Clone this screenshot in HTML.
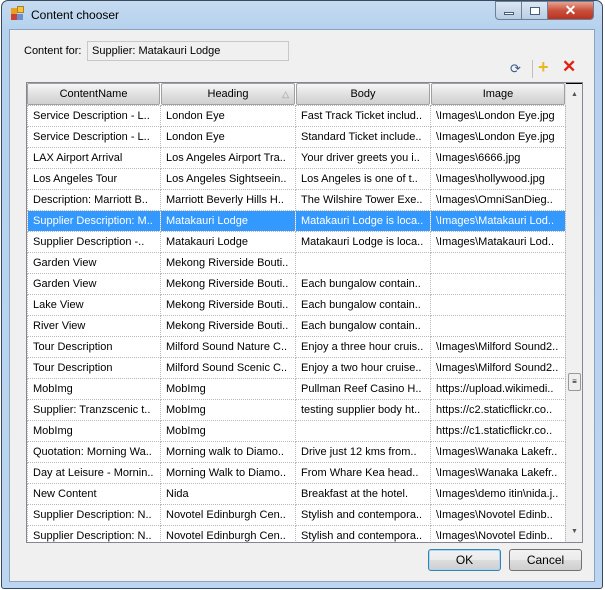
<!DOCTYPE html>
<html><head><style>
*{margin:0;padding:0;box-sizing:border-box}
body{width:605px;height:590px;overflow:hidden;background:#fff;font-family:"Liberation Sans",sans-serif;font-size:11px;color:#000;position:relative}
.frame{position:absolute;left:1px;top:0;width:602px;height:589px;border:1px solid #3a4a5c;border-radius:7px 7px 3px 3px;background:linear-gradient(#c5dbf0,#b5d1ee 30px,#bcd6f1);}
.client{position:absolute;left:9px;top:29px;width:586px;height:553px;background:#f0f0f0;border:1px solid #8ba3bd}
.title{position:absolute;left:31px;top:8px;font-size:12px;color:#000}
.ab{position:absolute;border:1px solid #6d7f95;top:1px;height:19px}
.abs{position:absolute;left:26px;top:82px;width:557px;height:461px;border:1px solid #828790;background:#fff;overflow:hidden}
table{border-collapse:collapse;position:absolute;left:0;top:22px;table-layout:fixed}
td{height:21px;border:1px dotted #b8b8b8;padding:0 5px;white-space:nowrap;overflow:hidden;font-size:11px}
tr.sel td{background:#3399ff;color:#fff}
.hd{position:absolute;top:0;height:22px;background:linear-gradient(#f6f6f6,#e1e1e1 50%,#cfcfcf);border:1px solid #a0a0a0;border-radius:2px;text-align:center;line-height:20px;font-size:11px}
.sb{position:absolute;left:538px;top:0;width:18px;height:460px;background:#f0f0f0;border-left:1px solid #e0e0e0}
.btn{position:absolute;height:22px;border:1px solid #707070;border-radius:3px;background:linear-gradient(#f2f2f2,#ebebeb 50%,#dddddd 50%,#cfcfcf);text-align:center;line-height:20px;font-size:12px}
</style></head><body>
<div class="frame"></div>
<div style="position:absolute;left:11px;top:8px;width:6px;height:6px;background:#e8a020"></div>
<div style="position:absolute;left:17px;top:6px;width:7px;height:7px;background:#f4c23c;border:1px solid #b08020"></div>
<div style="position:absolute;left:11px;top:14px;width:6px;height:6px;background:#d04030"></div>
<div style="position:absolute;left:17px;top:14px;width:6px;height:6px;background:#6a8fd0"></div>
<div class="title">Content chooser</div>
<div class="ab" style="left:495px;width:27px;border-radius:0 0 0 4px;background:linear-gradient(#dbe7f4,#b9cde3)"><div style="position:absolute;left:8px;top:10px;width:10px;height:3px;background:#fff;border:1px solid #435e80"></div></div>
<div class="ab" style="left:521px;width:27px;background:linear-gradient(#dbe7f4,#b9cde3)"><div style="position:absolute;left:8px;top:5px;width:10px;height:8px;border:1px solid #435e80;background:#fff"></div></div>
<div class="ab" style="left:547px;width:47px;border-radius:0 0 4px 0;background:linear-gradient(#e8a293,#c9503a 50%,#b93220);color:#fff;font-weight:bold;font-size:14px;text-align:center;line-height:17px">✕</div>
<div class="client"></div>
<div style="position:absolute;left:24px;top:45px">Content for:</div>
<div style="position:absolute;left:87px;top:41px;width:202px;height:20px;border:1px solid #c8c8c8;background:#f0f0f0;padding:3px 0 0 4px">Supplier: Matakauri Lodge</div>
<div style="position:absolute;left:510px;top:61px;color:#3a5a8a;font-size:13px">⟳</div>
<div style="position:absolute;left:532px;top:60px;width:1px;height:18px;background:#c0c0c0"></div>
<div style="position:absolute;left:538px;top:57px;color:#e8b820;font-size:18px;font-weight:bold">+</div>
<div style="position:absolute;left:562px;top:57px;color:#e02010;font-size:17px;font-weight:bold">✕</div>
<div class="abs">
<div class="hd" style="left:0;width:133px">ContentName</div>
<div class="hd" style="left:134px;width:134px">Heading<span style="position:absolute;right:5px;color:#999;font-size:9px">△</span></div>
<div class="hd" style="left:269px;width:134px">Body</div>
<div class="hd" style="left:404px;width:134px">Image</div>
<div class="sb"><div style="position:absolute;left:0;top:0;width:17px;height:6px;border-top:1px solid #000;border-right:1px solid #000"></div><div style="position:absolute;left:5px;top:8px;font-size:7px;color:#555">▲</div><div style="position:absolute;left:2px;top:290px;width:13px;height:18px;border:1px solid #999;border-radius:2px;background:#eee;font-size:8px;text-align:center;line-height:16px">≡</div><div style="position:absolute;left:5px;top:445px;font-size:7px;color:#555">▼</div></div>
<table>
<colgroup><col style="width:133px"><col style="width:135px"><col style="width:135px"><col style="width:135px"></colgroup>
<tr><td>Service Description - L..</td><td>London Eye</td><td>Fast Track Ticket includ..</td><td>\Images\London Eye.jpg</td></tr>
<tr><td>Service Description - L..</td><td>London Eye</td><td>Standard Ticket include..</td><td>\Images\London Eye.jpg</td></tr>
<tr><td>LAX Airport Arrival</td><td>Los Angeles Airport Tra..</td><td>Your driver greets you i..</td><td>\Images\6666.jpg</td></tr>
<tr><td>Los Angeles Tour</td><td>Los Angeles Sightseein..</td><td>Los Angeles is one of t..</td><td>\Images\hollywood.jpg</td></tr>
<tr><td>Description: Marriott B..</td><td>Marriott Beverly Hills H..</td><td>The Wilshire Tower Exe..</td><td>\Images\OmniSanDieg..</td></tr>
<tr class="sel"><td>Supplier Description: M..</td><td>Matakauri Lodge</td><td>Matakauri Lodge is loca..</td><td>\Images\Matakauri Lod..</td></tr>
<tr><td>Supplier Description -..</td><td>Matakauri Lodge</td><td>Matakauri Lodge is loca..</td><td>\Images\Matakauri Lod..</td></tr>
<tr><td>Garden View</td><td>Mekong Riverside Bouti..</td><td></td><td></td></tr>
<tr><td>Garden View</td><td>Mekong Riverside Bouti..</td><td>Each bungalow contain..</td><td></td></tr>
<tr><td>Lake View</td><td>Mekong Riverside Bouti..</td><td>Each bungalow contain..</td><td></td></tr>
<tr><td>River View</td><td>Mekong Riverside Bouti..</td><td>Each bungalow contain..</td><td></td></tr>
<tr><td>Tour Description</td><td>Milford Sound Nature C..</td><td>Enjoy a three hour cruis..</td><td>\Images\Milford Sound2..</td></tr>
<tr><td>Tour Description</td><td>Milford Sound Scenic C..</td><td>Enjoy a two hour cruise..</td><td>\Images\Milford Sound2..</td></tr>
<tr><td>MobImg</td><td>MobImg</td><td>Pullman Reef Casino H..</td><td>https://upload.wikimedi..</td></tr>
<tr><td>Supplier: Tranzscenic t..</td><td>MobImg</td><td>testing supplier body ht..</td><td>https://c2.staticflickr.co..</td></tr>
<tr><td>MobImg</td><td>MobImg</td><td></td><td>https://c1.staticflickr.co..</td></tr>
<tr><td>Quotation: Morning Wa..</td><td>Morning walk to Diamo..</td><td>Drive just 12 kms from..</td><td>\Images\Wanaka Lakefr..</td></tr>
<tr><td>Day at Leisure - Mornin..</td><td>Morning Walk to Diamo..</td><td>From Whare Kea head..</td><td>\Images\Wanaka Lakefr..</td></tr>
<tr><td>New Content</td><td>Nida</td><td>Breakfast at the hotel.</td><td>\Images\demo itin\nida.j..</td></tr>
<tr><td>Supplier Description: N..</td><td>Novotel Edinburgh Cen..</td><td>Stylish and contempora..</td><td>\Images\Novotel Edinb..</td></tr>
<tr><td>Supplier Description: N..</td><td>Novotel Edinburgh Cen..</td><td>Stylish and contempora..</td><td>\Images\Novotel Edinb..</td></tr>
</table>
</div>
<div class="btn" style="left:428px;top:549px;width:73px;border-color:#3c7fb1;box-shadow:inset 0 0 0 1px #a6d8f5">OK</div>
<div class="btn" style="left:509px;top:549px;width:73px">Cancel</div>
</body></html>
